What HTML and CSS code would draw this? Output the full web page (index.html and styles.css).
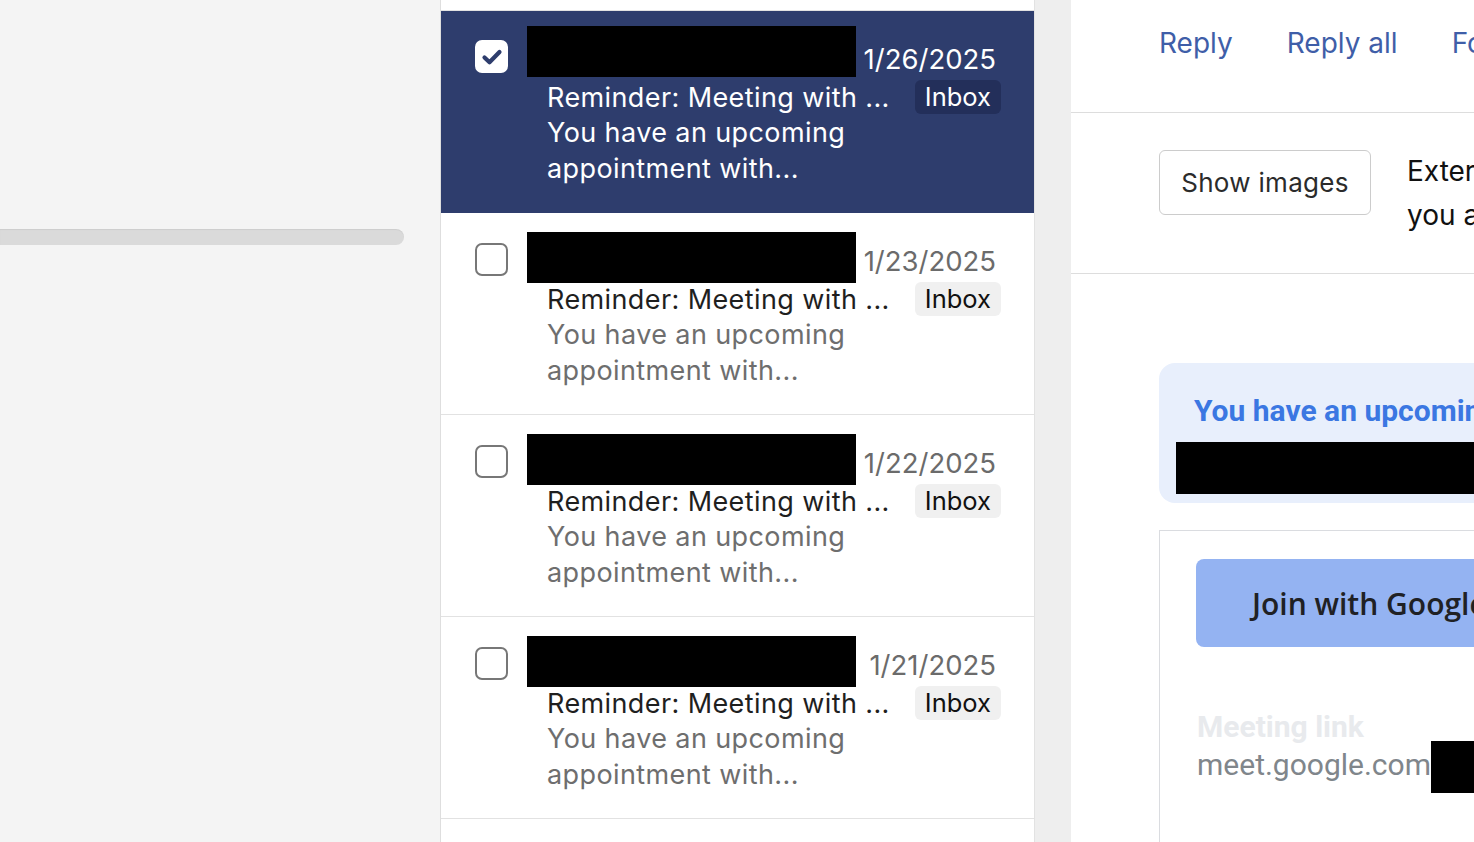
FILE: index.html
```html
<!DOCTYPE html>
<html lang="en">
<head>
    <meta charset="UTF-8">
    <meta name="viewport" content="width=device-width, initial-scale=1.0">
    <title>Mail</title>
    <link rel="stylesheet" href="styles.css">
</head>
<body>

    <aside class="sidebar">
        <div class="scroll-track"></div>
    </aside>

    <section class="message-list">
        <div class="list-top"></div>

        <div class="message selected">
            <span class="check checked">
                <svg viewBox="0 0 24 24" width="24" height="24"><path d="M4.5 12.5l5 4.8L19.5 7" fill="none" stroke="#2e3d6d" stroke-width="4.2" stroke-linecap="round" stroke-linejoin="round"/></svg>
            </span>
            <div class="message-body">
                <div class="message-head">
                    <span class="redacted"></span>
                    <span class="date">1/26/2025</span>
                </div>
                <div class="subject-line">
                    <span class="subject">Reminder: Meeting with ...</span>
                    <span class="tag">Inbox</span>
                </div>
                <p class="preview">You have an upcoming appointment with...</p>
            </div>
        </div>

        <div class="message">
            <span class="check"></span>
            <div class="message-body">
                <div class="message-head">
                    <span class="redacted"></span>
                    <span class="date">1/23/2025</span>
                </div>
                <div class="subject-line">
                    <span class="subject">Reminder: Meeting with ...</span>
                    <span class="tag">Inbox</span>
                </div>
                <p class="preview">You have an upcoming appointment with...</p>
            </div>
        </div>

        <div class="message">
            <span class="check"></span>
            <div class="message-body">
                <div class="message-head">
                    <span class="redacted"></span>
                    <span class="date">1/22/2025</span>
                </div>
                <div class="subject-line">
                    <span class="subject">Reminder: Meeting with ...</span>
                    <span class="tag">Inbox</span>
                </div>
                <p class="preview">You have an upcoming appointment with...</p>
            </div>
        </div>

        <div class="message">
            <span class="check"></span>
            <div class="message-body">
                <div class="message-head">
                    <span class="redacted"></span>
                    <span class="date">1/21/2025</span>
                </div>
                <div class="subject-line">
                    <span class="subject">Reminder: Meeting with ...</span>
                    <span class="tag">Inbox</span>
                </div>
                <p class="preview">You have an upcoming appointment with...</p>
            </div>
        </div>
    </section>

    <main class="reader">
        <div class="actions">
            <a class="action">Reply</a>
            <a class="action">Reply all</a>
            <a class="action">Forward</a>
        </div>

        <div class="images-bar">
            <button class="show-images">Show images</button>
            <p class="images-note">
                <span>External images are hidden for this message.</span>
                <span>you are sure the sender is trusted.</span>
            </p>
        </div>

        <div class="mail-content">
            <div class="event-card">
                <h3 class="event-title">You have an upcoming appointment with someone</h3>
                <div class="redacted wide"></div>
            </div>

            <div class="meet-box">
                <button class="join-btn">Join with Google Meet</button>
                <div class="meet-label">Meeting link</div>
                <div class="meet-link">meet.google.com<span class="redacted link-redact"></span></div>
            </div>
        </div>
    </main>

</body>
</html>
```

FILE: styles.css
```css
body {
    margin: 0;
    display: flex;
    height: 100vh;
    overflow: hidden;
    background-color: #eeeeee;
    font-family: 'Inter', 'Noto Sans', sans-serif;
}

/* left column */
.sidebar {
    width: 440px;
    flex-shrink: 0;
    background-color: #f4f4f4;
    border-right: 1px solid #dedede;
}
.scroll-track {
    margin-top: 229px;
    width: 404px;
    height: 16px;
    background-color: #dadada;
    border-radius: 0 8px 8px 0;
    box-shadow: inset 0 1px 1px rgba(0, 0, 0, 0.06);
}

/* message list */
.message-list {
    width: 593px;
    flex-shrink: 0;
    background-color: #ffffff;
    border-right: 1px solid #e2e2e2;
}
.list-top {
    height: 10px;
    border-bottom: 1px solid #e2e2e2;
}
.message {
    display: flex;
    height: 202px;
    box-sizing: border-box;
    padding: 15px 38px 0 34px;
    border-bottom: 1px solid #e2e2e2;
}
.message.selected {
    background-color: #2e3d6d;
    border-bottom-color: #2e3d6d;
}
.check {
    width: 33px;
    height: 33px;
    box-sizing: border-box;
    margin-top: 15px;
    margin-right: 19px;
    border: 2.5px solid #777777;
    border-radius: 7px;
    flex-shrink: 0;
    display: flex;
    align-items: center;
    justify-content: center;
}
.selected .check {
    margin-top: 14px;
}
.check.checked {
    background-color: #ffffff;
    border-color: #ffffff;
}
.message-body {
    flex: 1;
    min-width: 0;
}
.message-head {
    display: flex;
    align-items: flex-end;
    height: 51px;
}
.redacted {
    display: inline-block;
    background-color: #000000;
}
.message-head .redacted {
    width: 329px;
    height: 51px;
    flex-shrink: 0;
}
/* the cover boxes sit a little lower on the unread rows */
.message:not(.selected) .message-head .redacted {
    transform: translateY(4px);
}
.date {
    margin-left: auto;
    font-size: 27.5px;
    line-height: 34px;
    margin-bottom: 1px;
    color: #6b6b6b;
}
.subject-line {
    display: flex;
    align-items: center;
    padding-left: 20px;
    margin-top: 2px;
    margin-right: -5px;
    height: 36px;
}
.subject {
    flex: 1;
    font-size: 27px;
    letter-spacing: 0.4px;
    color: #1f1f1f;
    white-space: nowrap;
}
.tag {
    font-size: 25.5px;
    line-height: 34px;
    padding: 0 10px;
    border-radius: 6px;
    background-color: #f0f0f0;
    color: #111111;
}
.preview {
    margin: 0;
    padding-left: 20px;
    width: 340px;
    font-size: 27px;
    letter-spacing: 0.4px;
    line-height: 36px;
    color: #6e6e6e;
}
.selected .date,
.selected .subject,
.selected .preview {
    color: #ffffff;
}
.selected .tag {
    background-color: #232f5a;
    color: #ffffff;
}

/* reading pane */
.reader {
    flex: 1;
    margin-left: 36px;
    background-color: #ffffff;
    overflow: hidden;
    white-space: nowrap;
}
.actions {
    height: 113px;
    box-sizing: border-box;
    padding: 24px 0 0 88px;
    display: flex;
    gap: 54px;
    border-bottom: 1px solid #dddddd;
}
.action {
    font-size: 28px;
    line-height: 38px;
    color: #3f5ea8;
}
.images-bar {
    height: 161px;
    box-sizing: border-box;
    padding: 37px 0 0 88px;
    display: flex;
    gap: 36px;
    border-bottom: 1px solid #dddddd;
}
.show-images {
    flex-shrink: 0;
    width: 212px;
    height: 65px;
    background-color: #ffffff;
    border: 1.5px solid #cccccc;
    border-radius: 6px;
    font-family: 'Inter', sans-serif;
    font-size: 26px;
    letter-spacing: 0.3px;
    color: #2b2b2b;
}
.images-note {
    margin: 0;
    font-size: 28px;
    line-height: 44px;
    margin-top: -1px;
    color: #111111;
}
.images-note span {
    display: block;
}
.mail-content {
    padding: 89px 0 0 88px;
}
.event-card {
    background-color: #e8effc;
    border-radius: 16px 0 0 16px;
    height: 140px;
    box-sizing: border-box;
    padding: 29px 0 0 17px;
}
.event-title {
    margin: 0 0 0 18px;
    font-family: 'Roboto', sans-serif;
    font-weight: 700;
    font-size: 30px;
    line-height: 38px;
    color: #3b77e2;
}
.redacted.wide {
    display: block;
    height: 52px;
    margin-top: 12px;
}
.meet-box {
    margin-top: 27px;
    border: 1px solid #dadce0;
    border-right: none;
    height: 400px;
    padding: 28px 0 0 36px;
}
.join-btn {
    display: block;
    width: 400px;
    height: 88px;
    text-align: left;
    padding-left: 56px;
    border: none;
    border-radius: 8px;
    background-color: #94b3f2;
    font-family: 'Open Sans', sans-serif;
    font-weight: 600;
    font-size: 30px;
    color: #202124;
}
.meet-label {
    margin-top: 61px;
    padding-left: 1px;
    font-family: 'Roboto', sans-serif;
    font-weight: 700;
    font-size: 30px;
    line-height: 38px;
    color: #e8eaed;
}
.meet-link {
    display: flex;
    align-items: flex-start;
    padding-left: 1px;
    font-family: 'Roboto', sans-serif;
    font-size: 30px;
    line-height: 38px;
    color: #80868b;
}
.link-redact {
    width: 200px;
    height: 52px;
    margin-top: -5px;
}
```
